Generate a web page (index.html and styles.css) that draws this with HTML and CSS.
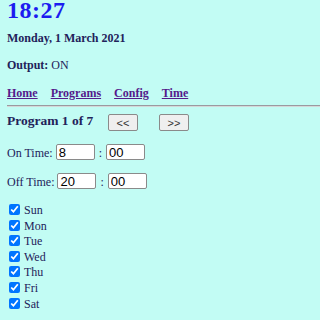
FILE: index.html
```html
<!DOCTYPE html>
<html>
<head>
<meta charset="utf-8">
<link rel="stylesheet" href="styles.css">
</head>
<body>
<div class="clock">18:27</div>
<div class="date">Monday, 1 March 2021</div>
<div class="output"><b>Output:</b> ON</div>
<nav class="nav">
  <a href="#">Home</a>
  <a href="#">Programs</a>
  <a href="#">Config</a>
  <a href="#">Time</a>
</nav>
<hr class="rule">
<div class="prog">
  <span class="prog-title">Program 1 of 7</span>
  <button class="btn">&lt;&lt;</button>
  <button class="btn btn-next">&gt;&gt;</button>
</div>
<div class="row row-on"><span class="lbl">On Time:</span><input class="num" value="8"><span class="colon">:</span><input class="num" value="00"></div>
<div class="row row-off"><span class="lbl">Off Time:</span><input class="num" value="20"><span class="colon">:</span><input class="num" value="00"></div>
<div class="days">
  <label><input type="checkbox" checked>Sun</label>
  <label><input type="checkbox" checked>Mon</label>
  <label><input type="checkbox" checked>Tue</label>
  <label><input type="checkbox" checked>Wed</label>
  <label><input type="checkbox" checked>Thu</label>
  <label><input type="checkbox" checked>Fri</label>
  <label><input type="checkbox" checked>Sat</label>
</div>
</body>
</html>
```
FILE: styles.css
```css
html, body {
  background: #c2fcf4;
}
body {
  margin: 0 0 0 7px;
  font-family: "Liberation Serif", "Times New Roman", serif;
  font-size: 12px;
  color: #22225a;
}
.clock {
  font-size: 24px;
  font-weight: bold;
  color: #1c1cf0;
  line-height: 20px;
  letter-spacing: 0.5px;
}
.date {
  font-weight: bold;
  margin-top: 11px;
  line-height: 14px;
}
.output {
  margin-top: 13px;
  line-height: 14px;
}
.nav {
  margin-top: 14px;
  display: flex;
  gap: 13px;
  line-height: 14px;
}
.nav a {
  color: #551a8b;
  font-weight: bold;
}
.rule {
  margin: 5px 0 0 0;
  border: 0;
  border-top: 1px solid #9a9aa0;
  border-bottom: 1px solid #d4d8d8;
  height: 0;
}
.prog {
  display: flex;
  align-items: flex-start;
  margin-top: 7px;
}
.prog-title {
  font-size: 13.5px;
  font-weight: bold;
  line-height: 13px;
  width: 101px;
}
.btn {
  width: 30px;
  height: 17px;
  font-size: 11px;
  font-family: "Liberation Sans", Arial, sans-serif;
  color: #333;
  background: #efefef;
  border: 1px solid #8a8a8a;
  border-radius: 2px;
  padding: 0;
}
.btn-next {
  margin-left: 21px;
}
.row {
  display: flex;
  align-items: baseline;
  margin-top: 13px;
  line-height: 14px;
}
.lbl {
  margin-right: 3px;
}
.colon {
  margin: 0 4px;
}
.num {
  box-sizing: border-box;
  width: 39px;
  height: 16px;
  font-size: 13px;
  font-family: "Liberation Sans", Arial, sans-serif;
  color: #000;
  background: #fff;
  border: 1px solid #8a8a8a;
  border-radius: 2px;
  padding: 1px 2px;
  margin: 0;
}
.days {
  margin-top: 14px;
  display: flex;
  flex-direction: column;
}
.days label {
  line-height: 15.6px;
  display: flex;
  align-items: flex-start;
}
.days input {
  margin: 1px 4px 0 2px;
  width: 11px;
  height: 11px;
}
```
